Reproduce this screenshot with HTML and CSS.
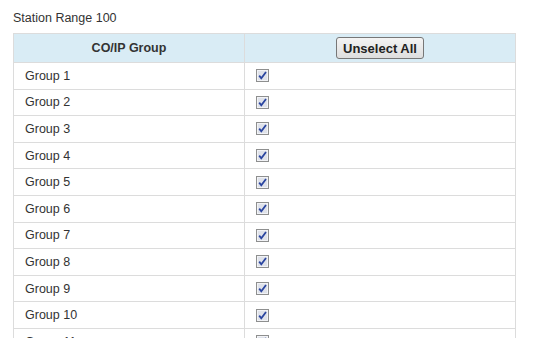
FILE: index.html
```html
<!DOCTYPE html>
<html lang="en">
<head>
    <meta charset="UTF-8">
    <title>Station Range</title>
    <link rel="stylesheet" href="styles.css">
</head>
<body>
    <div class="page">
        <p class="range-title">Station Range 100</p>

        <table class="group-table">
            <thead>
                <tr>
                    <th class="col-name">CO/IP Group</th>
                    <th class="col-check"><button type="button" class="btn">Unselect All</button></th>
                </tr>
            </thead>
            <tbody id="groupRows"></tbody>
        </table>
    </div>

    <script>
        // Build the group rows, all checked by default
        const rows = document.getElementById('groupRows');
        const checkSvg = '<svg viewBox="0 0 13 13" width="13" height="13">' +
            '<rect x="0.5" y="0.5" width="12" height="12" fill="#dfe2ea" stroke="#8e8f8f"/>' +
            '<rect x="1.5" y="1.5" width="10" height="10" fill="none" stroke="#f2f3f6"/>' +
            '<path d="M3.2 6.6 L5.3 9.3 L10 3" fill="none" stroke="#2a45a0" stroke-width="1.8"/>' +
            '</svg>';

        for (let i = 1; i <= 12; i++) {
            const tr = document.createElement('tr');
            tr.innerHTML = '<td>Group ' + i + '</td>' +
                '<td><label class="check"><input type="checkbox" checked>' +
                '<span class="box">' + checkSvg + '</span></label></td>';
            rows.appendChild(tr);
        }
    </script>
</body>
</html>
```

FILE: styles.css
```css
* {
    margin: 0;
    padding: 0;
    box-sizing: border-box;
}

body {
    font-family: 'Liberation Sans', Arial, sans-serif;
    font-size: 12.5px;
    color: #333;
    background: #fff;
    height: 338px;
    overflow: hidden;
}

.page {
    padding: 11px 0 0 13px;
}

.range-title {
    height: 22px;
    line-height: 15px;
}

.group-table {
    width: 503px;
    border-collapse: collapse;
}

.group-table th,
.group-table td {
    border: 1px solid #dcdcdc;
    text-align: left;
}

.group-table th {
    background: #d9ecf5;
    height: 29px;
    font-weight: bold;
    text-align: center;
    color: #333;
}

.col-name {
    width: 231px;
}

.group-table td {
    height: 26.6px;
    padding: 0 11px;
    vertical-align: middle;
}

.check {
    display: block;
    width: 13px;
    height: 13px;
    cursor: pointer;
}

.check input {
    display: none;
}

.check .box,
.check svg {
    display: block;
}

.btn {
    font-family: inherit;
    font-size: 13px;
    font-weight: bold;
    color: #222;
    padding: 2px 6px;
    height: 22px;
    border: 1px solid #777;
    border-radius: 3px;
    background: linear-gradient(#f4f4f4, #dedede);
    cursor: pointer;
}
```
